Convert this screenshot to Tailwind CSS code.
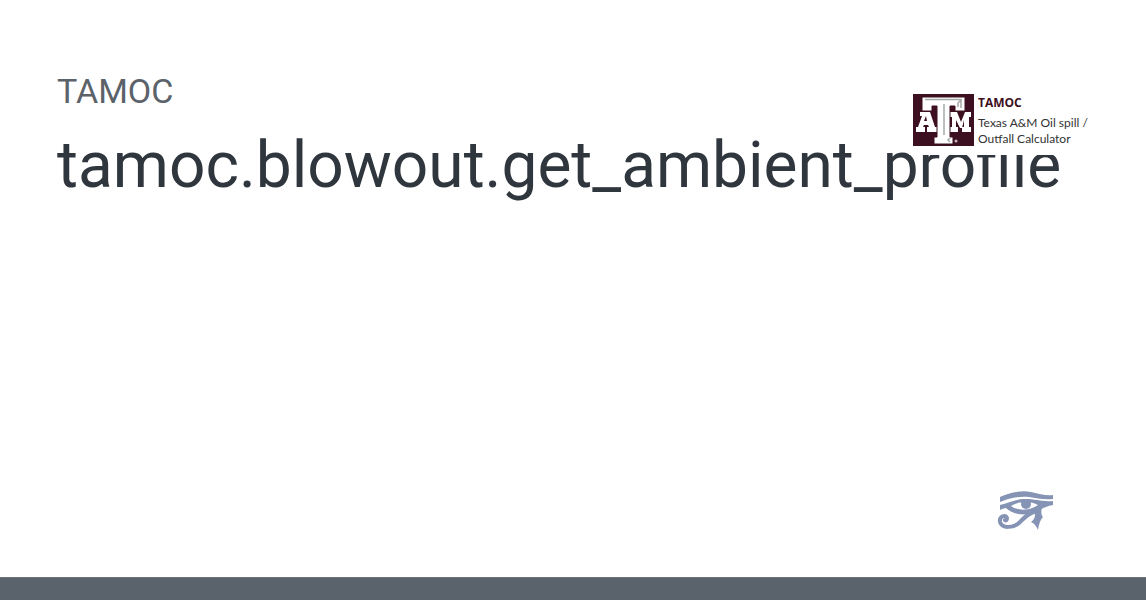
<!DOCTYPE html>
<html lang="en">
<head>
<meta charset="utf-8">
<title>tamoc.blowout.get_ambient_profile</title>
<script src="https://cdn.jsdelivr.net/npm/@tailwindcss/browser@4"></script>
</head>
<body class="relative flex min-h-screen flex-col bg-white font-['Roboto',sans-serif]">
<main class="flex grow flex-col px-[57px] pt-[71px]">
  <p class="text-[34px] leading-[40px] text-[#5b6269]">TAMOC</p>
  <h1 class="mt-[15px] text-[64px] leading-[80px] whitespace-nowrap text-[#2f363d]">tamoc.blowout.get_ambient_profile</h1>
  <svg class="mt-auto mr-[34px] mb-[45px] h-[42px] w-[58px] self-end" viewBox="0 0 58 42" fill="none" stroke="#8594b5" role="img" aria-label="Eye of Horus">
    <path d="M3 7C12 3 23 0 34 2C43 4 49 6 56 5V9C46 10 40 8 32 7C22 6 13 8 3 12Z" fill="#8594b5" stroke="none"/>
    <path d="M3 15C12 13 18 9 28 9C39 9 45 12 56 11V15C50 16 46 18 41 21C31 27 16 25 9 18C7 18 5 19 3 20ZM14 16C20 21 33 21 41 15C34 11 22 11 14 16Z" fill="#8594b5" fill-rule="evenodd" stroke="none"/>
    <circle cx="29" cy="14" r="5" fill="#8594b5" stroke="none"/>
    <path d="M41 21C33 22 28 27 23 32C17 38 5 39 3 32C2 26 9 24 10 28C10 30 9 31 8 30" stroke-width="4" stroke-linecap="round"/>
    <path d="M37 21L45 17C44 21 44 25 46 27C43 30 42 34 41 40C39 36 38 34 34 32C38 29 39 25 37 21Z" fill="#8594b5" stroke="none"/>
  </svg>
</main>
<footer class="h-[23px] border-t border-[#6b747b] bg-[#5a636c]"></footer>

<!-- Project logo, laid over the end of the heading -->
<div class="absolute top-[84px] right-[57px] flex h-[71px] w-[180px] items-start gap-[4px] bg-white pt-[10px] pl-[4px] font-['Open_Sans',sans-serif] text-[12px] leading-[16px] text-[#333]">
  <svg class="h-[52px] w-[61px] shrink-0" viewBox="0 0 61 52" role="img" aria-label="Texas A&amp;M">
    <path fill="#3c1021" d="M0 0H61V52H0Z"/>
    <g fill="#fff">
      <path fill-rule="evenodd" d="M7 18H17L22 33H24V38H14V33H16L15 31H11L10 33H12V38H3V33H5L9 22H7ZM11 27H14L13 22Z"/>
      <path d="M37 18H44L48 28L52 18H58V23H56V33H58V38H49V33H51V26L49 34H47L43 26V33H45V38H37V33H39V23H37Z"/>
      <path stroke="#3c1021" stroke-width="1" d="M9 3H52V17H42V12H37V43H40V50H21V43H24V12H19V17H9Z"/>
    </g>
    <path fill="none" stroke="#a5aaa7" stroke-width="1.5" d="M12 5.5H48V14M31 10V41M48 6L45 9V13M37 44L35 46L37 48"/>
    <circle cx="43" cy="47" r="1.5" fill="#c7b8be"/>
  </svg>
  <div class="pt-[1px] whitespace-nowrap">
    <p class="mb-[4px] font-bold text-[#3c1021]">TAMOC</p>
    <p class="font-['Lato',sans-serif]">Texas A&amp;M Oil spill /<br>Outfall Calculator</p>
  </div>
</div>
</body>
</html>
